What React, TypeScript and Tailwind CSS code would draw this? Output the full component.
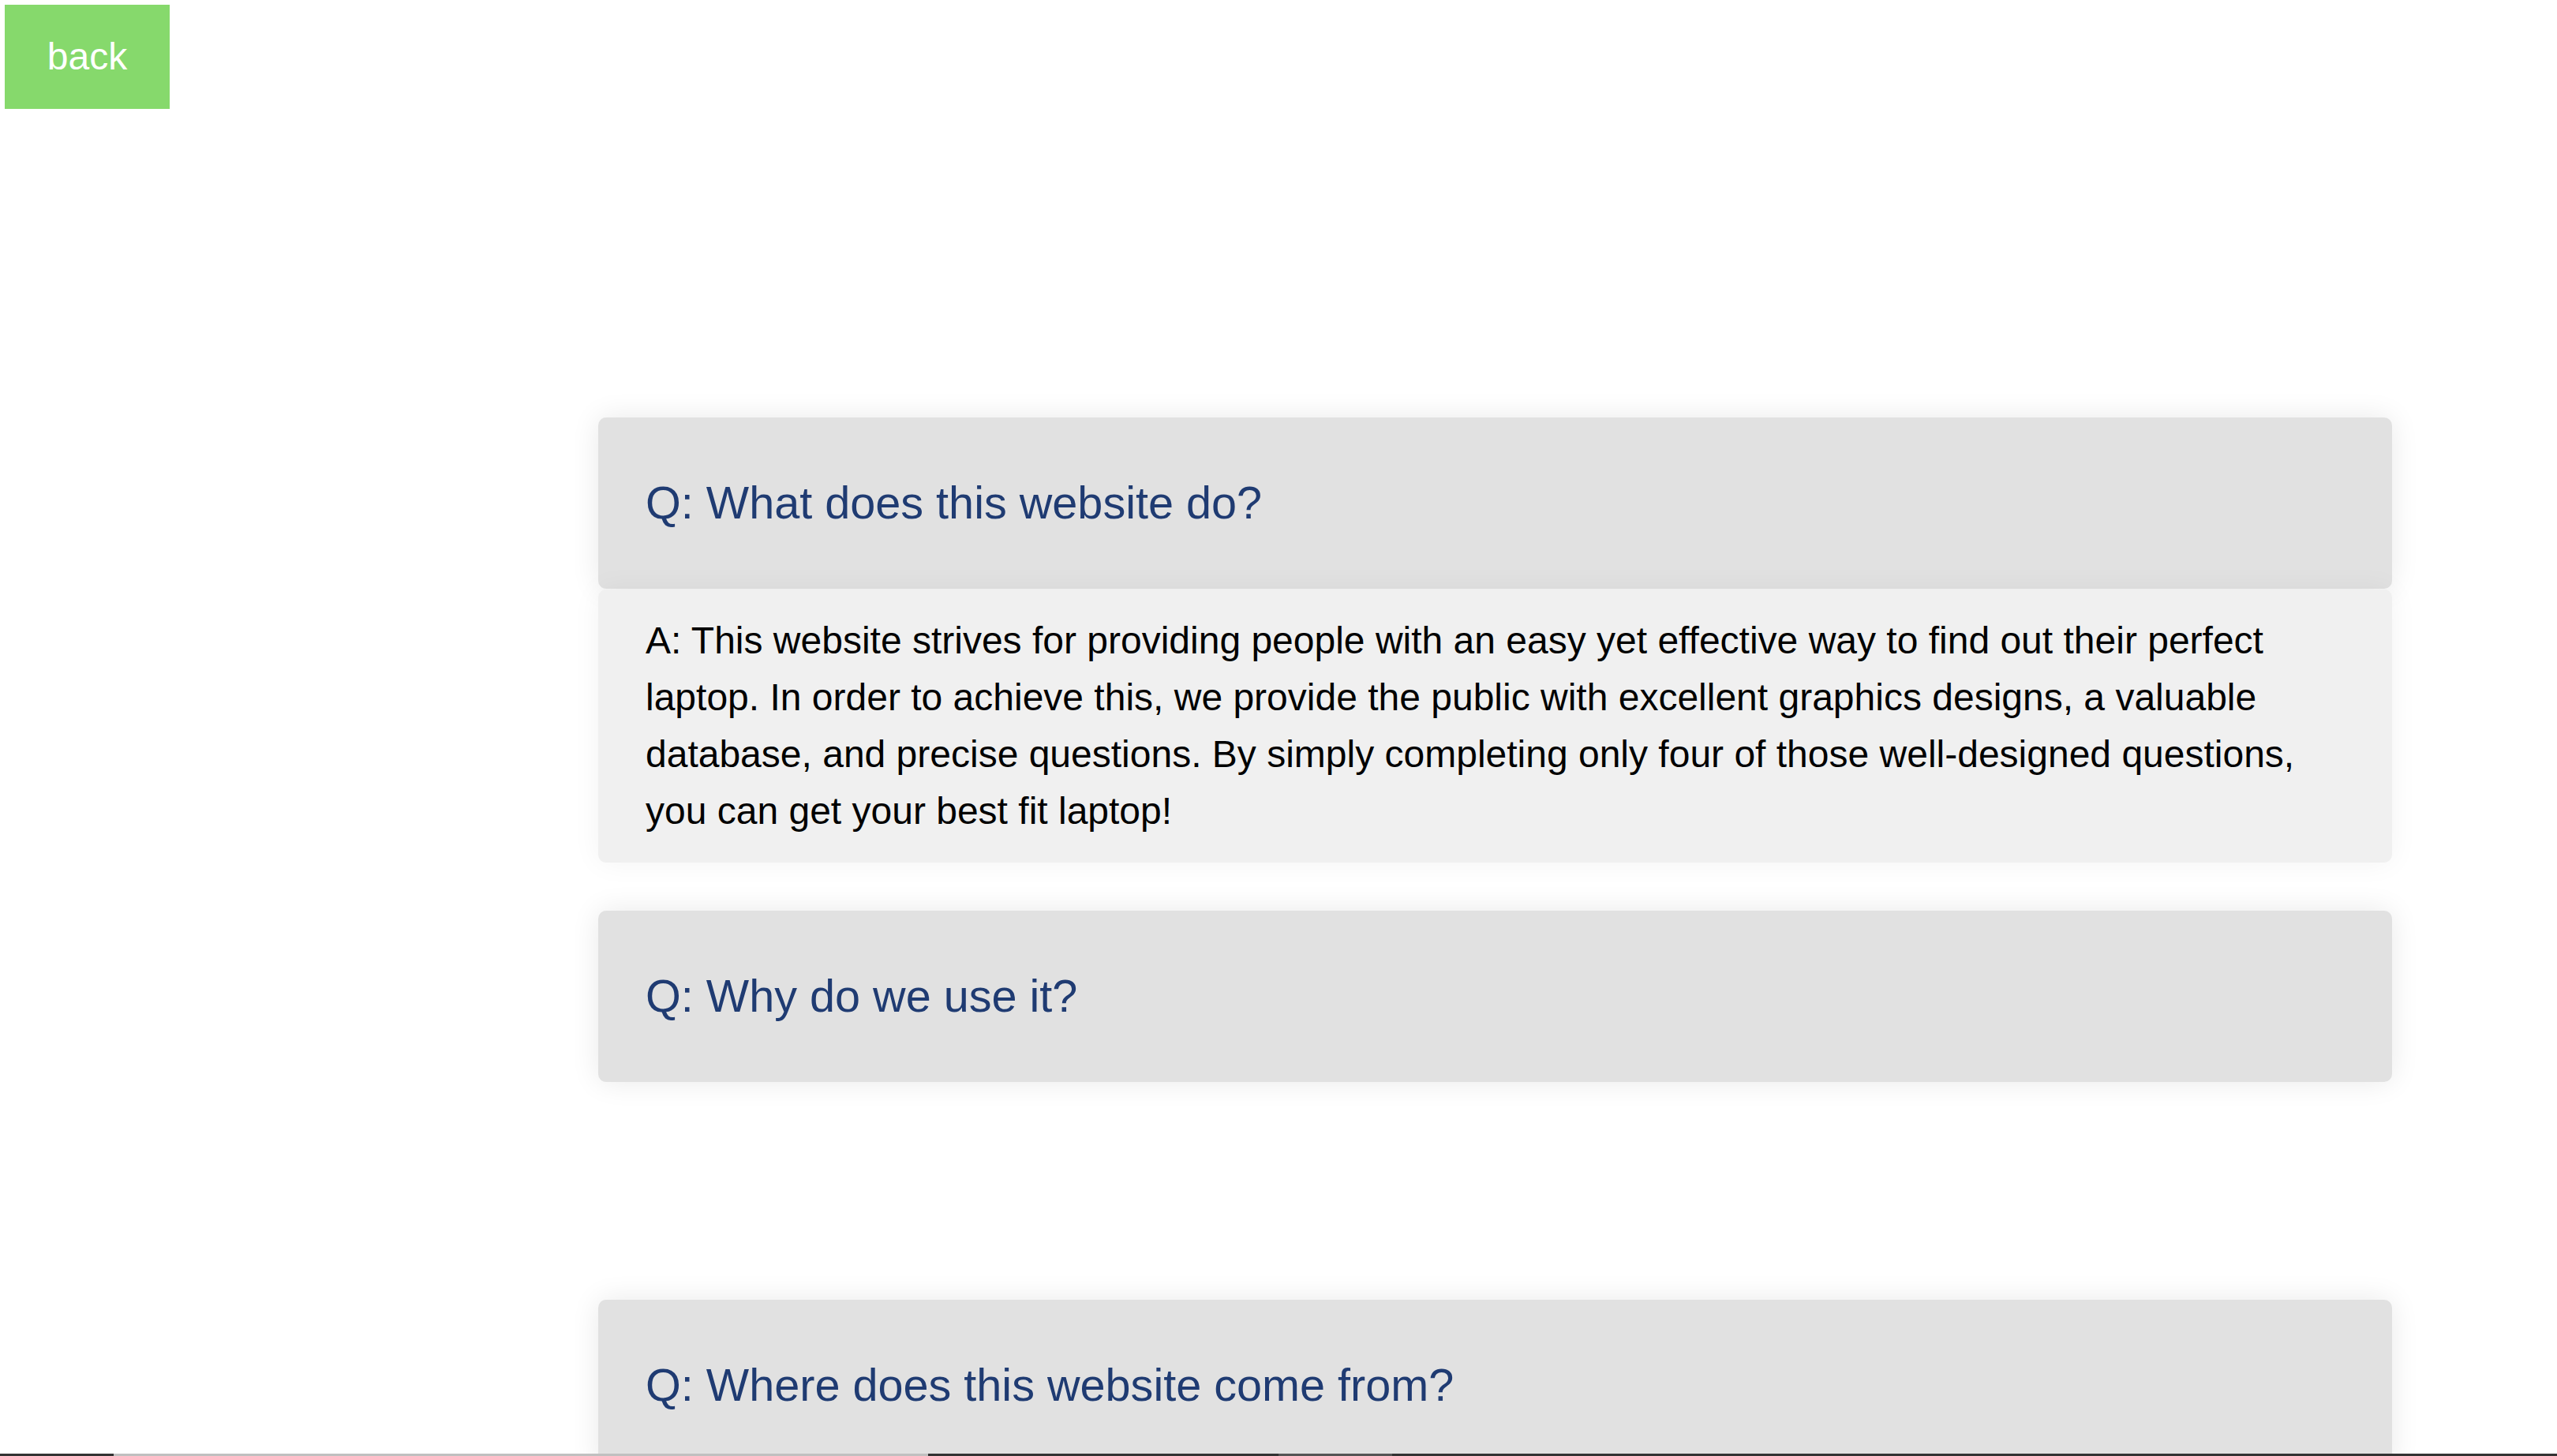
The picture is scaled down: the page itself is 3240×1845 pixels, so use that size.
import React from "react";

const answer =
  "A: This website strives for providing people with an easy yet effective way to find out their perfect laptop. In order to achieve this, we provide the public with excellent graphics designs, a valuable database, and precise questions. By simply completing only four of those well-designed questions, you can get your best fit laptop!";

function Question({ text }: { text: string }) {
  return (
    <div className="flex h-[217px] items-center rounded-[10px] bg-[#e1e1e1] pl-[60px] pr-[60px] shadow-[0_0_36px_rgba(0,0,0,0.09)]">
      <h2 className="text-[57.6px] font-normal leading-[1.15] text-[#1f3b72]">{text}</h2>
    </div>
  );
}

export default function App() {
  return (
    <div
      className="relative h-screen overflow-hidden bg-white"
      style={{ fontFamily: '"Liberation Sans", Arial, sans-serif' }}
    >
      <div className="p-[6px]">
        <button className="flex h-[132px] w-[209px] items-center justify-center bg-[#86d96c] text-[48px] leading-none text-white">
          back
        </button>
      </div>

      <div className="ml-[758px] mt-[385px] w-[2273px]">
        <Question text="Q: What does this website do?" />
        <div className="mt-px rounded-[10px] bg-[#f0f0f0] pb-[29px] pl-[60px] pr-[60px] pt-[29px] shadow-[0_0_36px_rgba(0,0,0,0.05)]">
          <p className="text-[48px] leading-[72px] text-black">{answer}</p>
        </div>

        <div className="mt-[61px]">
          <Question text="Q: Why do we use it?" />
        </div>

        <div className="mt-[276px]">
          <Question text="Q: Where does this website come from?" />
        </div>
      </div>

      <div className="absolute bottom-0 left-0 flex h-[3px] w-full">
        <div className="w-[144px] bg-[#333333]" />
        <div className="w-[1032px] bg-[#c0c0c0]" />
        <div className="w-[444px] bg-[#333333]" />
        <div className="w-[144px] bg-[#555555]" />
        <div className="flex-1 bg-[#333333]" />
      </div>
    </div>
  );
}
